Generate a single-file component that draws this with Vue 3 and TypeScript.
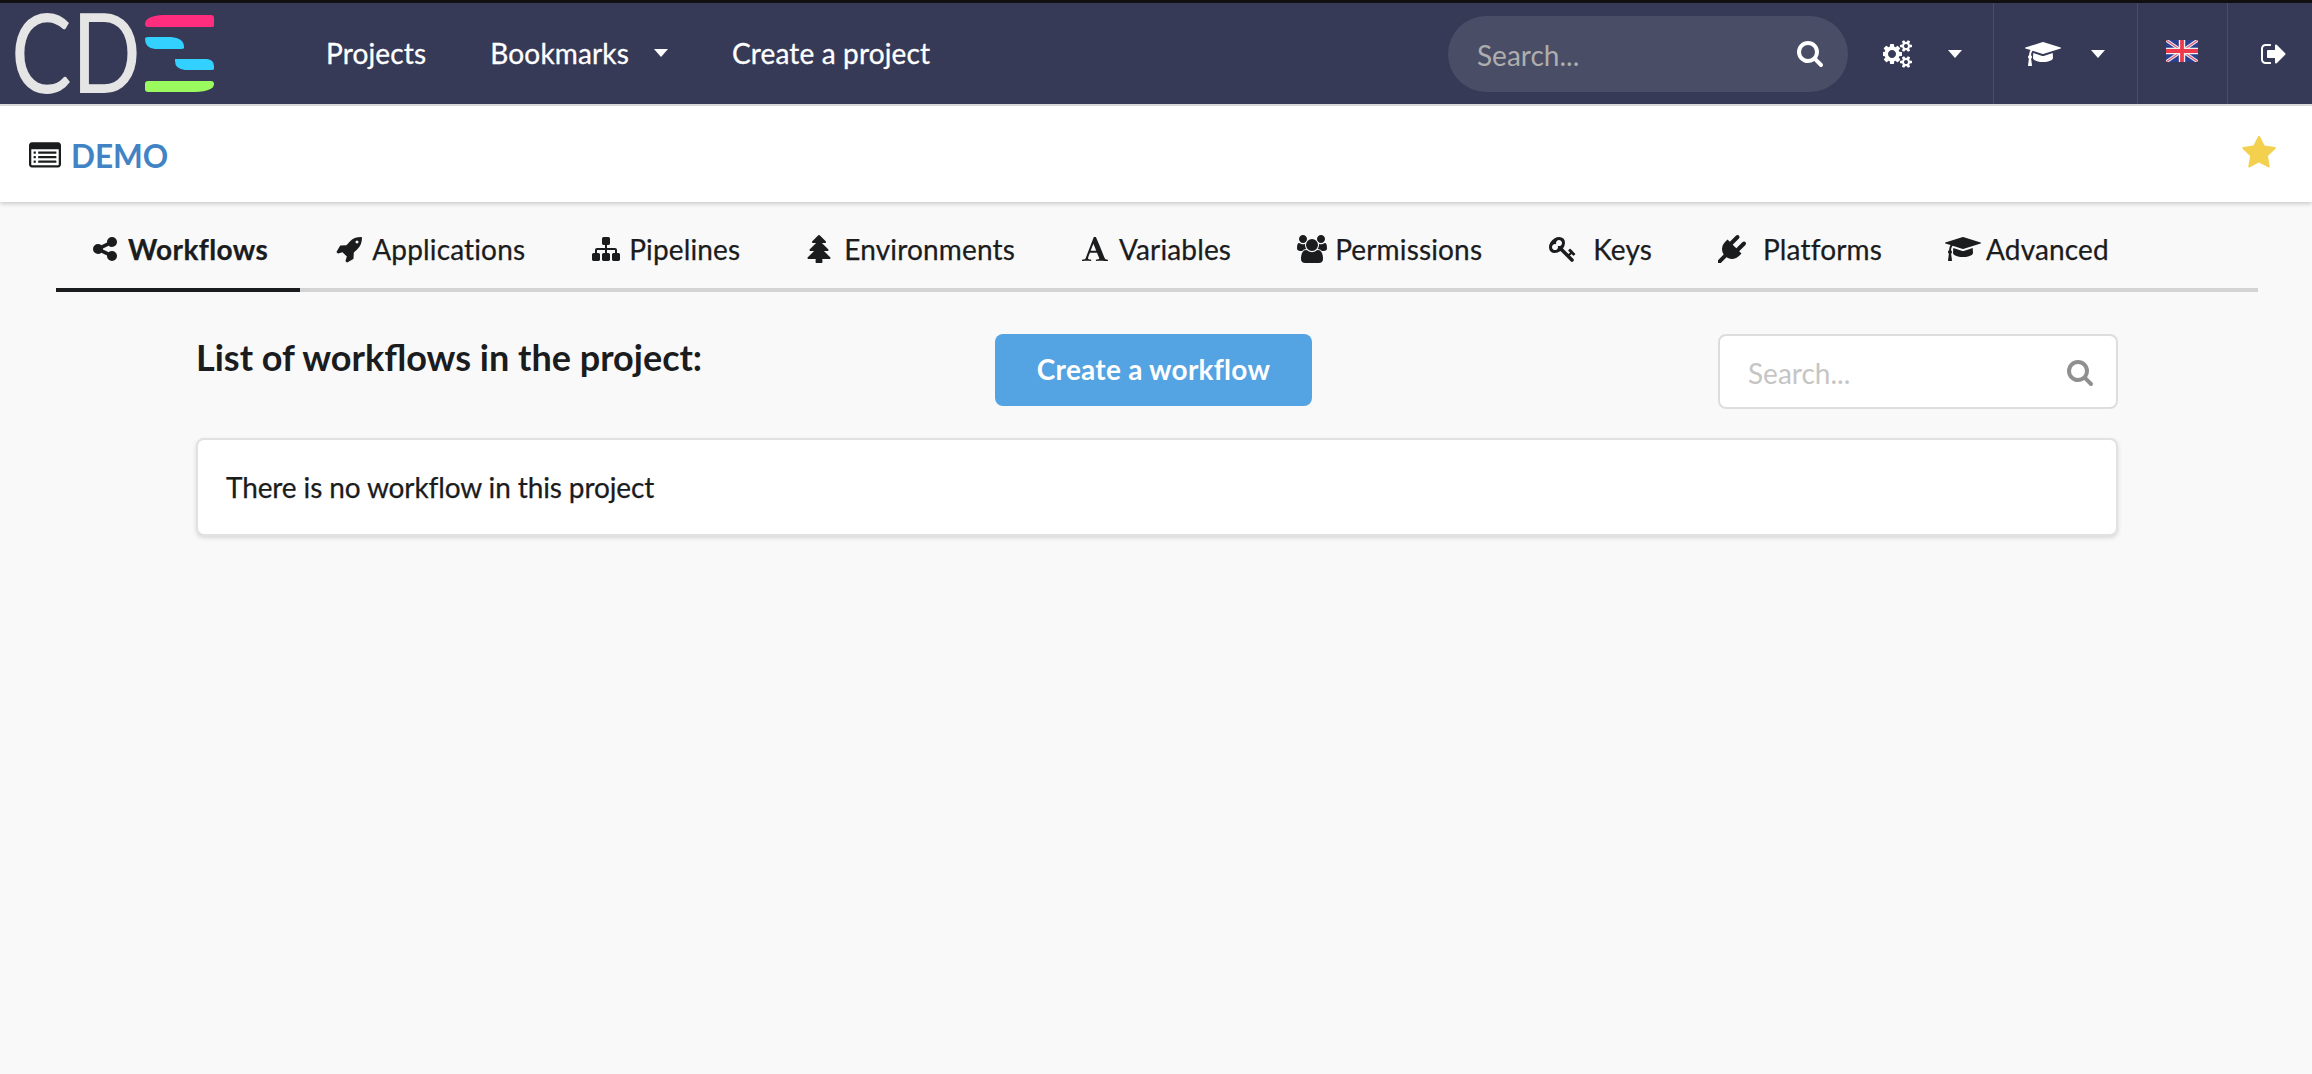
<template>
  <div class="page">
    <nav class="navbar">
      <a class="logo">
        <svg class="logo__mark" viewBox="0 0 210 92" width="210" height="92">
          <text class="logo__text" x="1" y="82" textLength="130" lengthAdjust="spacingAndGlyphs">CD</text>
          <g transform="translate(135 3)">
            <path d="M0 10Q0 2 18 1H66Q69 1 69 4V12Q69 13 66 13H3Q0 13 0 10Z" fill="#ff2d7e" />
            <path d="M0 25Q0 23 3 23H26Q39 24 39 33V34Q39 35 36 35H10Q0 34 0 25Z" fill="#33d1ff" />
            <path d="M30 45H62Q69 46 69 52V55Q69 56 66 56H40Q30 55 30 47Z" fill="#33d1ff" />
            <path d="M0 70Q0 67 3 67H66Q69 67 69 70Q69 77 50 78H3Q0 78 0 75Z" fill="#9bfb5e" />
          </g>
        </svg>
      </a>
      <a v-for="link in navLinks" :key="link.label" class="navbar__link">
        {{ link.label }}
        <span v-if="link.caret" class="caret"></span>
      </a>
      <div class="navbar__right">
        <div class="navsearch">
          <input class="navsearch__input" placeholder="Search..." />
          <svg class="navsearch__icon" viewBox="0 0 1792 1792"><path :d="icons.search" /></svg>
        </div>
        <div class="navitem navitem--cogs">
          <svg class="navitem__cogs" viewBox="0 0 1920 1792"><path :d="icons.cogs" /></svg>
          <span class="caret"></span>
        </div>
        <div class="navitem navitem--help">
          <svg class="navitem__cap" viewBox="0 0 2304 1792"><path :d="icons.cap" /></svg>
          <span class="caret"></span>
        </div>
        <div class="navitem navitem--lang">
          <svg class="flag" viewBox="0 0 60 40" preserveAspectRatio="none">
            <rect width="60" height="40" fill="#2b3f92" />
            <path d="M0 0L60 40M60 0L0 40" stroke="#e8e6f2" stroke-width="6" />
            <path d="M0 0L60 40M60 0L0 40" stroke="#e5596b" stroke-width="2" />
            <path d="M30 0V40M0 20H60" stroke="#f4eef0" stroke-width="12" />
            <path d="M30 0V40M0 20H60" stroke="#ec3a4c" stroke-width="7" />
          </svg>
        </div>
        <div class="navitem navitem--out">
          <svg class="navitem__out" viewBox="0 0 1664 1792"><path :d="icons.signOut" /></svg>
        </div>
      </div>
    </nav>

    <header class="projecthead">
      <svg class="projecthead__icon" viewBox="0 0 1792 1792"><path :d="icons.listAlt" /></svg>
      <span class="projecthead__name">DEMO</span>
      <svg class="projecthead__star" viewBox="0 0 1792 1792"><path :d="icons.star" /></svg>
    </header>

    <div class="tabs">
      <a
        v-for="tab in tabs"
        :key="tab.label"
        class="tabs__item"
        :class="{ 'tabs__item--active': tab.active }"
      >
        <span class="tabs__slot">
          <svg :viewBox="tab.box" :style="{ width: tab.size + 'px', height: '28px' }"><path :d="tab.icon" /></svg>
        </span>
        <span class="tabs__label" :class="{ 'tabs__label--spaced': tab.spaced }">{{ tab.label }}</span>
      </a>
    </div>

    <main class="content">
      <div class="content__row">
        <h3 class="content__title">List of workflows in the project:</h3>
        <button class="createbtn">Create a workflow</button>
        <div class="filter">
          <input class="filter__input" placeholder="Search..." />
          <svg class="filter__icon" viewBox="0 0 1792 1792"><path :d="icons.search" /></svg>
        </div>
      </div>
      <div class="card">There is no workflow in this project</div>
    </main>
  </div>
</template>

<script setup lang="ts">
interface Tab {
  label: string
  icon: string
  box: string
  size: number
  active?: boolean
  spaced?: boolean
}

const icons = {
  search: 'M1216 832q0-185-131.500-316.500t-316.500-131.500-316.500 131.500-131.500 316.500 131.500 316.500 316.500 131.500 316.500-131.500 131.500-316.500zm512 832q0 52-38 90t-90 38q-54 0-90-38l-343-342q-179 124-399 124-143 0-273.500-55.500t-225-150-150-225-55.500-273.500 55.500-273.500 150-225 225-150 273.500-55.500 273.500 55.500 225 150 150 225 55.500 273.500q0 220-124 399l343 343q37 37 37 90z',
  star: 'M1728 647q0 22-26 48l-363 354 86 500q1 7 1 20 0 21-10.500 35.500t-30.500 14.500q-19 0-40-12l-449-236-449 236q-22 12-40 12-21 0-31.500-14.500t-10.500-35.500q0-6 2-20l86-500-364-354q-25-27-25-48 0-37 56-46l502-73 225-455q19-41 49-41t49 41l225 455 502 73q56 9 56 46z',
  signOut: 'M704 1440q0 4 1 20t.5 26.500-3 23.500-10 19.500-20.500 6.500h-320q-119 0-203.500-84.500t-84.500-203.500v-704q0-119 84.500-203.500t203.500-84.500h320q13 0 22.500 9.500t9.500 22.500q0 4 1 20t.5 26.500-3 23.500-10 19.500-20.500 6.500h-320q-66 0-113 47t-47 113v704q0 66 47 113t113 47h312l11.500 1 11.500 3 8 5.500 7 9 2 13.500zm928-544q0 26-19 45l-544 544q-19 19-45 19t-45-19-19-45v-288h-448q-26 0-45-19t-19-45v-384q0-26 19-45t45-19h448v-288q0-26 19-45t45-19 45 19l544 544q19 19 19 45z',
  cap: 'M1774 836l18 316q4 69-82 128t-235 93.500-323 34.500-323-34.500-235-93.500-82-128l18-316 574 181q22 7 48 7t48-7zm530-324q0 23-22 31l-1120 352q-4 1-10 1t-10-1l-652-206q-43 34-71 111.500t-34 178.500q63 36 63 109 0 69-58 107l58 433q2 14-8 25-9 11-24 11h-192q-15 0-24-11-10-11-8-25l58-433q-58-38-58-107 0-73 65-111 11-207 98-330l-333-104q-22-8-22-31t22-31l1120-352q4-1 10-1t10 1l1120 352q22 8 22 31z',
  cogs: 'M832 896q0-106-75-181t-181-75-181 75-75 181 75 181 181 75 181-75 75-181zm768 512q0-52-38-90t-90-38-90 38-38 90q0 53 37.500 90.500t90.500 37.500 90.500-37.500 37.500-90.500zm0-1024q0-52-38-90t-90-38-90 38-38 90q0 53 37.500 90.500t90.500 37.500 90.500-37.500 37.500-90.500zm-384 421v185q0 10-7 19.500t-16 10.500l-155 24q-11 35-32 76 34 48 90 115 7 11 7 20 0 12-7 19-23 30-82.500 89.500t-78.500 59.500q-11 0-21-7l-115-90q-37 19-77 31-11 108-23 155-7 24-30 24h-186q-11 0-20-7.500t-10-17.500l-23-153q-34-10-75-31l-118 89q-7 7-20 7-11 0-21-8-144-133-144-160 0-9 7-19 10-14 41-53t47-61q-23-44-35-82l-152-24q-10-1-17-9.500t-7-19.500v-185q0-10 7-19.500t16-10.500l155-24q11-35 32-76-34-48-90-115-7-11-7-20 0-12 7-20 22-30 82-89t79-59q11 0 21 7l115 90q34-18 77-32 11-108 23-154 7-24 30-24h186q11 0 20 7.500t10 17.500l23 153q34 10 75 31l118-89q8-7 20-7 11 0 21 8 144 133 144 160 0 8-7 19-12 16-42 54t-45 60q23 48 34 82l152 23q10 2 17 10.500t7 19.500zm640 533v140q0 16-149 31-12 27-30 52 51 113 51 138 0 4-4 7-122 71-124 71-8 0-46-47t-52-68q-20 2-30 2t-30-2q-14 21-52 68t-46 47q-2 0-124-71-4-3-4-7 0-25 51-138-18-25-30-52-149-15-149-31v-140q0-16 149-31 13-29 30-52-51-113-51-138 0-4 4-7 4-2 35-20t59-34 30-16q8 0 46 46.500t52 67.500q20-2 30-2t30 2q51-71 92-112l6-2q4 0 124 70 4 3 4 7 0 25-51 138 17 23 30 52 149 15 149 31zm0-1024v140q0 16-149 31-12 27-30 52 51 113 51 138 0 4-4 7-122 71-124 71-8 0-46-47t-52-68q-20 2-30 2t-30-2q-14 21-52 68t-46 47q-2 0-124-71-4-3-4-7 0-25 51-138-18-25-30-52-149-15-149-31v-140q0-16 149-31 13-29 30-52-51-113-51-138 0-4 4-7 4-2 35-20t59-34 30-16q8 0 46 46.500t52 67.500q20-2 30-2t30 2q51-71 92-112l6-2q4 0 124 70 4 3 4 7 0 25-51 138 17 23 30 52 149 15 149 31z',
  listAlt: 'M384 1184v64q0 13-9.500 22.500t-22.500 9.500h-64q-13 0-22.500-9.500t-9.500-22.500v-64q0-13 9.500-22.500t22.500-9.500h64q13 0 22.500 9.500t9.500 22.500zm0-256v64q0 13-9.500 22.500t-22.500 9.500h-64q-13 0-22.500-9.500t-9.500-22.500v-64q0-13 9.500-22.500t22.500-9.500h64q13 0 22.500 9.500t9.500 22.500zm0-256v64q0 13-9.500 22.500t-22.500 9.500h-64q-13 0-22.500-9.500t-9.500-22.500v-64q0-13 9.500-22.500t22.500-9.500h64q13 0 22.500 9.500t9.500 22.500zm1152 512v64q0 13-9.500 22.500t-22.500 9.500h-960q-13 0-22.500-9.500t-9.500-22.500v-64q0-13 9.500-22.500t22.500-9.500h960q13 0 22.500 9.500t9.500 22.500zm0-256v64q0 13-9.500 22.500t-22.500 9.500h-960q-13 0-22.500-9.500t-9.500-22.500v-64q0-13 9.500-22.500t22.500-9.500h960q13 0 22.500 9.500t9.500 22.500zm0-256v64q0 13-9.500 22.500t-22.500 9.500h-960q-13 0-22.500-9.500t-9.500-22.500v-64q0-13 9.500-22.500t22.500-9.500h960q13 0 22.500 9.500t9.500 22.500zm128 704v-832q0-13-9.500-22.500t-22.500-9.500h-1472q-13 0-22.500 9.500t-9.500 22.500v832q0 13 9.500 22.500t22.500 9.500h1472q13 0 22.500-9.500t9.500-22.500zm128-1088v1088q0 66-47 113t-113 47h-1472q-66 0-113-47t-47-113v-1088q0-66 47-113t113-47h1472q66 0 113 47t47 113z',
}

const navLinks = [
  { label: 'Projects', caret: false },
  { label: 'Bookmarks', caret: true },
  { label: 'Create a project', caret: false },
]

const tabs: Tab[] = [
  {
    label: 'Workflows',
    active: true,
    box: '0 0 1792 1792',
    size: 28,
    icon: 'M1344 1024q133 0 226.500 93.500t93.500 226.500-93.500 226.500-226.500 93.500-226.500-93.500-93.500-226.500q0-12 2-34l-360-180q-92 86-218 86-133 0-226.500-93.500t-93.500-226.500 93.500-226.500 226.500-93.500q126 0 218 86l360-180q-2-22-2-34 0-133 93.500-226.500t226.500-93.500 226.500 93.500 93.500 226.500-93.500 226.500-226.500 93.500q-126 0-218-86l-360 180q2 22 2 34t-2 34l360 180q92-86 218-86z',
  },
  {
    label: 'Applications',
    box: '0 0 1792 1792',
    size: 28,
    icon: 'M1504 448q0-40-28-68t-68-28-68 28-28 68 28 68 68 28 68-28 28-68zm224-288q0 249-75.500 430.500t-253.500 360.500q-81 80-195 176l-20 379q-2 16-16 26l-384 224q-7 4-16 4-12 0-23-9l-64-64q-13-14-8-32l85-276-281-281-276 85q-3 1-9 1-14 0-23-9l-64-64q-17-19-5-39l224-384q10-14 26-16l379-20q96-114 176-195 188-187 358-258t431-71q14 0 24 9.500t10 22.500z',
  },
  {
    label: 'Pipelines',
    box: '0 0 1792 1792',
    size: 28,
    icon: 'M1792 1248v320q0 40-28 68t-68 28h-320q-40 0-68-28t-28-68v-320q0-40 28-68t68-28h96v-192h-512v192h96q40 0 68 28t28 68v320q0 40-28 68t-68 28h-320q-40 0-68-28t-28-68v-320q0-40 28-68t68-28h96v-192h-512v192h96q40 0 68 28t28 68v320q0 40-28 68t-68 28h-320q-40 0-68-28t-28-68v-320q0-40 28-68t68-28h96v-192q0-52 38-90t90-38h512v-192h-96q-40 0-68-28t-28-68v-320q0-40 28-68t68-28h320q40 0 68 28t28 68v320q0 40-28 68t-68 28h-96v192h512q52 0 90 38t38 90v192h96q40 0 68 28t28 68z',
  },
  {
    label: 'Environments',
    box: '0 0 1792 1792',
    size: 28,
    icon: 'M1504 1472q0 26-19 45t-45 19h-462q1 17 6 87.500t5 108.500q0 25-18 42.500t-43 17.500h-320q-25 0-43-17.500t-18-42.500q0-38 5-108.500t6-87.500h-462q-26 0-45-19t-19-45 19-45l402-403h-229q-26 0-45-19t-19-45 19-45l402-403h-197q-26 0-45-19t-19-45 19-45l384-384q19-19 45-19t45 19l384 384q19 19 19 45t-19 45-45 19h-197l402 403q19 19 19 45t-19 45-45 19h-229l402 403q19 19 19 45z',
  },
  {
    label: 'Variables',
    box: '0 0 1792 1792',
    size: 28,
    icon: 'M789 559l-170 450q33 0 136.500 2t160.500 2q19 0 57-2-87-253-184-452zm-725 1105l2-79q23-7 56-12.500t57-10.500 49.500-14.500 44.500-29 31-50.500l237-616 280-724h128q8 14 11 21l205 480q33 78 106 257.500t114 274.500q15 34 58 144.500t72 168.500q20 45 35 57 19 15 88 29.500t84 20.500q6 38 6 57 0 5-.5 13.500t-.5 12.500q-63 0-190-8t-191-8q-76 0-215 7t-178 8q0-43 4-78l131-28q1 0 12.500-2.500t15.500-3.500 14.500-4.500 15-6.500 11-8 9-11 2.500-14q0-16-31-96.500t-72-177.500-42-100l-450-2q-26 58-76.500 195.500t-50.500 162.500q0 22 14 37.500t43.500 24.500 48.500 13.500 57 8.500 41 4q1 19 1 58 0 9-2 27-58 0-174.500-10t-174.500-10q-8 0-26.500 4t-21.500 4q-80 14-188 14z',
  },
  {
    label: 'Permissions',
    box: '0 0 1920 1792',
    size: 30,
    icon: 'M593 896q-162 5-265 128h-134q-82 0-138-40.500t-56-118.500q0-353 124-353 6 0 43.500 21t97.500 42.500 119 21.500q67 0 133-23-5 37-5 66 0 139 81 256zm1071 637q0 120-73 189.500t-194 69.500h-874q-121 0-194-69.500t-73-189.500q0-53 3.500-103.500t14-109 26.500-108.500 43-97.500 62-81 85.500-53.500 111.500-20q10 0 43 21.500t73 48 107 48 135 21.500 135-21.500 107-48 73-48 43-21.500q61 0 111.500 20t85.500 53.500 62 81 43 97.500 26.500 108.500 14 109 3.500 103.500zm-1024-1277q0 106-75 181t-181 75-181-75-75-181 75-181 181-75 181 75 75 181zm704 384q0 159-112.500 271.500t-271.500 112.500-271.500-112.500-112.500-271.500 112.500-271.500 271.500-112.500 271.500 112.500 112.500 271.500zm576 225q0 78-56 118.500t-138 40.500h-134q-103-123-265-128 81-117 81-256 0-29-5-66 66 23 133 23 59 0 119-21.500t97.500-42.500 43.500-21q124 0 124 353zm-128-609q0 106-75 181t-181 75-181-75-75-181 75-181 181-75 181 75 75 181z',
  },
  {
    label: 'Keys',
    spaced: true,
    box: '0 0 1792 1792',
    size: 28,
    icon: 'M832 512q0-80-56-136t-136-56-136 56-56 136q0 42 19 83-41-19-83-19-80 0-136 56t-56 136 56 136 136 56 136-56 56-136q0-42-19-83 41 19 83 19 80 0 136-56t56-136zm851 704q0 17-49 66t-66 49q-9 0-28.500-16t-36.500-33-38.500-40-24.500-26l-96 96 220 220q28 28 28 68 0 42-39 81t-81 39q-40 0-68-28l-671-671q-176 131-365 131-163 0-265.500-102.500t-102.500-265.500q0-160 95-313t248-248 313-95q163 0 265.500 102.500t102.500 265.500q0 189-131 365l355 355 96-96q-3-3-26-24.500t-40-38.500-33-36.500-16-28.500q0-17 49-66t66-49q13 0 23 10 6 6 46 44.500t82 79.500 86.500 86 73 78 28.500 41z',
  },
  {
    label: 'Platforms',
    spaced: true,
    box: '0 0 1792 1792',
    size: 28,
    icon: 'M1755 453q37 38 37 90.500t-37 90.500l-401 400 150 150-160 160q-163 163-389.500 186.500t-411.500-100.500l-362 362h-181v-181l362-362q-124-185-100.500-411.500t186.500-389.500l160-160 150 150 400-401q38-37 91-37t90 37 37 90.500-37 90.500l-400 401 234 234 401-400q38-37 91-37t90 37z',
  },
  {
    label: 'Advanced',
    box: '0 0 2304 1792',
    size: 36,
    icon: icons.cap,
  },
]
</script>

<style scoped>
.page {
  min-height: 1074px;
  background: #f9f9f9;
  font-family: Lato, "Liberation Sans", sans-serif;
  font-size: 28px;
  color: #1b1c1d;
  box-sizing: border-box;
}

.navbar {
  display: flex;
  align-items: stretch;
  height: 106px;
  box-sizing: border-box;
  border-top: 3px solid #101010;
  border-bottom: 2px solid #dcdcdc;
  background: #363a56;
  color: #fff;
  letter-spacing: 0.15px;
}

.logo {
  width: 294px;
  flex: none;
  box-sizing: border-box;
  padding: 8px 0 0 10px;
}

.logo__mark {
  display: block;
}

.logo__text {
  font-size: 110px;
  font-weight: 400;
  letter-spacing: 0;
  fill: #e5e5e5;
}

.navbar__link {
  display: flex;
  align-items: center;
  padding: 0 32px 1px;
  -webkit-text-stroke: 0.3px #fff;
}

.caret {
  display: inline-block;
  width: 0;
  height: 0;
  margin-left: 25px;
  border-left: 7px solid transparent;
  border-right: 7px solid transparent;
  border-top: 8px solid #fff;
}

.navbar__right {
  margin-left: auto;
  display: flex;
  align-items: stretch;
}

.navsearch {
  align-self: flex-start;
  margin-top: 13px;
  width: 400px;
  height: 76px;
  border-radius: 38px;
  background: #494d65;
  display: flex;
  align-items: center;
  box-sizing: border-box;
  padding: 0 24px 0 29px;
}

.navsearch__input {
  flex: 1;
  min-width: 0;
  border: none;
  outline: none;
  background: none;
  padding: 2px 0 0;
  font: inherit;
  color: #fff;
}

.navsearch__input::placeholder {
  color: #aeaeae;
  opacity: 1;
}

.navsearch__icon {
  width: 28px;
  height: 28px;
  fill: #fff;
  margin-top: -2px;
}

.navitem {
  display: flex;
  align-items: center;
  box-sizing: border-box;
  fill: #fff;
}

.navitem .caret {
  margin-left: 0;
}

.navitem--cogs {
  width: 145px;
  padding-left: 35px;
  gap: 35px;
}

.navitem--help {
  width: 144px;
  padding-left: 31px;
  gap: 30px;
  border-left: 1px solid #494d65;
}

.navitem--lang {
  width: 90px;
  padding-left: 28px;
  border-left: 1px solid #494d65;
  align-items: flex-start;
}

.navitem--out {
  width: 85px;
  padding-left: 32px;
  border-left: 1px solid #494d65;
}

.navitem__cogs {
  width: 30px;
  height: 28px;
}

.navitem__cap {
  width: 36px;
  height: 28px;
}

.navitem__out {
  width: 26px;
  height: 28px;
}

.flag {
  margin-top: 37px;
  width: 32px;
  height: 22px;
  filter: blur(0.5px);
}

.projecthead {
  display: flex;
  align-items: center;
  height: 96px;
  padding: 4px 35px 0 29px;
  background: #fff;
  box-shadow: 0 2px 4px rgba(0, 0, 0, 0.18);
  box-sizing: border-box;
}

.projecthead__icon {
  width: 32px;
  height: 32px;
  fill: #1b1c1d;
  margin-right: 10px;
}

.projecthead__name {
  font-size: 31.5px;
  font-weight: 700;
  color: #4183c4;
}

.projecthead__star {
  margin-left: auto;
  width: 36px;
  height: 36px;
  fill: #f4d04f;
  margin-top: -6px;
}

.tabs {
  display: flex;
  margin: 0 54px 0 56px;
  height: 86px;
  border-bottom: 4px solid #d4d4d5;
  box-sizing: content-box;
  letter-spacing: 0.15px;
  -webkit-text-stroke: 0.25px #1b1c1d;
}

.tabs__item {
  display: flex;
  align-items: center;
  padding: 8px 32px 0;
  margin-bottom: -4px;
  border-bottom: 4px solid transparent;
  white-space: nowrap;
}

.tabs__item--active {
  font-weight: 700;
  letter-spacing: 0.4px;
  border-bottom-color: #1b1c1d;
}

.tabs__slot {
  width: 33px;
  margin-right: 7px;
  display: flex;
  justify-content: center;
  flex: none;
}

.tabs__slot svg {
  fill: #1b1c1d;
  flex: none;
}

.tabs__label--spaced {
  margin-left: 7px;
}

.content {
  margin: 0 194px 0 196px;
  padding-top: 42px;
}

.content__row {
  display: grid;
  grid-template-columns: 799px 1fr 400px;
  align-items: start;
  margin-bottom: 29px;
}

.content__title {
  margin: 0;
  font-size: 36px;
  font-weight: 700;
  line-height: 46px;
}

.createbtn {
  width: 317px;
  height: 72px;
  border: none;
  border-radius: 8px;
  background: #54a3e2;
  color: #fff;
  font: inherit;
  font-weight: 700;
  letter-spacing: 0.25px;
  padding: 0 0 2px;
}

.filter {
  height: 75px;
  border: 2px solid #ddd;
  border-radius: 8px;
  background: #fff;
  box-sizing: border-box;
  display: flex;
  align-items: center;
  padding: 0 22px 0 28px;
}

.filter__input {
  flex: 1;
  min-width: 0;
  border: none;
  outline: none;
  background: none;
  padding: 2px 0 0;
  font: inherit;
  color: #1b1c1d;
}

.filter__input::placeholder {
  color: #c5c5c5;
  opacity: 1;
}

.filter__icon {
  width: 28px;
  height: 28px;
  fill: #8f8f8f;
}

.card {
  height: 98px;
  box-sizing: border-box;
  display: flex;
  align-items: center;
  padding: 0 28px;
  background: #fff;
  border: 2px solid #e2e2e2;
  border-radius: 8px;
  box-shadow: 0 2px 4px rgba(34, 36, 38, 0.15);
  letter-spacing: -0.12px;
  -webkit-text-stroke: 0.25px #1b1c1d;
}
</style>

<style>
html,
body {
  margin: 0;
  background: #f9f9f9;
}
</style>
